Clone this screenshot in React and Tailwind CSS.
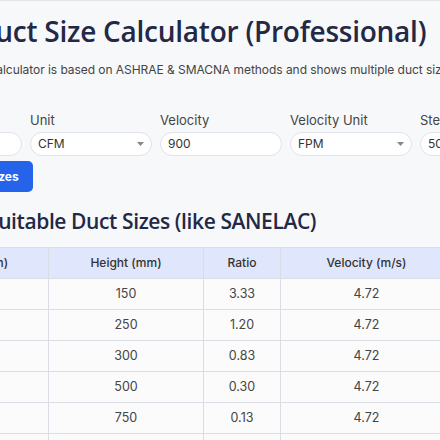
import { useState } from "react";

const rows = [
  { w: 500, h: 150, ratio: "3.33", v: "4.72" },
  { w: 300, h: 250, ratio: "1.20", v: "4.72" },
  { w: 250, h: 300, ratio: "0.83", v: "4.72" },
  { w: 150, h: 500, ratio: "0.30", v: "4.72" },
  { w: 100, h: 750, ratio: "0.13", v: "4.72" },
  { w: 75, h: 1000, ratio: "0.08", v: "4.72" },
];

function Field({ label, children }) {
  return (
    <div className="flex flex-col">
      <label className="text-[13px] leading-[16px] text-[#444] mb-[4px]">{label}</label>
      {children}
    </div>
  );
}

function Select({ value }) {
  return (
    <div className="h-[24px] rounded-full border border-[#dfe2e8] bg-white flex items-center justify-between pl-[7px] pr-[7px]">
      <span className="text-[12px] text-[#333]">{value}</span>
      <svg width="7" height="4" viewBox="0 0 7 4">
        <path d="M0 0 L7 0 L3.5 4 Z" fill="#888" />
      </svg>
    </div>
  );
}

function Input({ value }) {
  return (
    <div className="h-[24px] rounded-full border border-[#dfe2e8] bg-white flex items-center pl-[7px]">
      <span className="text-[12px] text-[#333]">{value}</span>
    </div>
  );
}

export default function App() {
  const [data] = useState(rows);

  return (
    <div className="min-h-screen w-[440px] overflow-hidden bg-[#f7f8fa] border-t border-[#e2e4e8] font-['Inter','Liberation_Sans',sans-serif]">
      <div className="-ml-[100px] w-[700px] pt-[10px]">
        {/* TITLE */}
        <h1 className="ml-[75px] text-[28px] leading-[40px] font-semibold tracking-[-0.25px] text-[#232846] font-['Open_Sans',sans-serif]">
          Duct Size Calculator (Professional)
        </h1>
        <p className="mt-[9px] ml-[8px] text-[12px] leading-[20px] tracking-[-0.05px] text-[#444]">
          This duct size calculator is based on ASHRAE &amp; SMACNA methods and shows multiple duct sizes
          <br />
          like SANELAC.
        </p>

        {/* INPUTS */}
        <div className="mt-[12px] grid grid-cols-[repeat(5,122px)] gap-x-[8px]">
          <Field label="Airflow">
            <Input value="1000" />
          </Field>
          <Field label="Unit">
            <Select value="CFM" />
          </Field>
          <Field label="Velocity">
            <Input value="900" />
          </Field>
          <Field label="Velocity Unit">
            <Select value="FPM" />
          </Field>
          <Field label="Step (mm)">
            <Input value="50" />
          </Field>
        </div>

        <button className="mt-[5px] ml-[15px] h-[31px] px-[14px] rounded-[5px] bg-[#2563eb] text-white text-[12px] font-bold">
          Calculate Sizes
        </button>

        {/* RESULTS */}
        <h2 className="mt-[15px] ml-[87px] text-[21px] leading-[28px] font-semibold tracking-[-0.4px] text-[#232846] font-['Open_Sans',sans-serif]">
          Suitable Duct Sizes (like SANELAC)
        </h2>

        <table className="mt-[12px] border-collapse text-[12.5px] text-[#444]">
          <thead>
            <tr className="bg-[#e0e6fb] h-[31px]">
              <th className="w-[148px] border border-[#dadde3] text-[12px] font-medium text-[#333]">Width (mm)</th>
              <th className="w-[155px] border border-[#dadde3] text-[12px] font-medium text-[#333]">Height (mm)</th>
              <th className="w-[77px] border border-[#dadde3] text-[12px] font-medium text-[#333]">Ratio</th>
              <th className="w-[172px] border border-[#dadde3] text-[12px] font-medium text-[#333]">Velocity (m/s)</th>
            </tr>
          </thead>
          <tbody>
            {data.map((r) => (
              <tr key={r.h} className="h-[31px] bg-[#fbfbfc]">
                <td className="border border-[#dadde3] text-center">{r.w}</td>
                <td className="border border-[#dadde3] text-center">{r.h}</td>
                <td className="border border-[#dadde3] text-center">{r.ratio}</td>
                <td className="border border-[#dadde3] text-center">{r.v}</td>
              </tr>
            ))}
          </tbody>
        </table>
      </div>
    </div>
  );
}
